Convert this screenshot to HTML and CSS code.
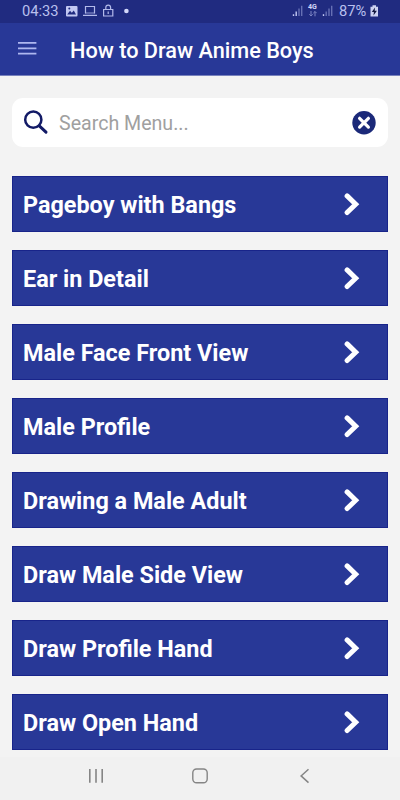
FILE: index.html
```html
<!DOCTYPE html>
<html lang="en">
<head>
    <meta charset="UTF-8">
    <meta name="viewport" content="width=device-width, initial-scale=1.0">
    <title>How to Draw Anime Boys</title>
    <link rel="stylesheet" href="styles.css">
</head>
<body>
    <div class="status-bar">
        <span class="time">04:33</span>
        <svg class="notifications" width="66" height="23" viewBox="0 0 66 23">
            <!-- picture -->
            <rect x="1" y="6" width="11.5" height="10.5" rx="1" fill="#c3c9f3"/>
            <path d="M2.2 14.5 L5 10.8 L6.8 12.8 L8.8 10.5 L11 14.5 Z" fill="#202b80"/>
            <circle cx="4.3" cy="8.6" r="1" fill="#202b80"/>
            <!-- laptop -->
            <path d="M20.5 13.5 V6.5 H29.5 V13.5 M18 15.4 H32" fill="none" stroke="#b3baea" stroke-width="1.2"/>
            <path d="M20.5 13 H29.5" stroke="#b3baea" stroke-width="0.8"/>
            <!-- lock -->
            <path d="M38.6 9.5 H47.8 V16 H38.6 Z M40.8 9.5 V7.5 A2.4 2.4 0 0 1 45.6 7.5 V9.5 M43.2 11.4 V14" fill="none" stroke="#b3baea" stroke-width="1.2"/>
            <circle cx="61.4" cy="11" r="2.3" fill="#d3d8fa"/>
        </svg>
        <div class="signals">
            <svg class="bars" width="12" height="23" viewBox="0 0 12 23">
                <path d="M1.5 14.2 V16 M4.2 11.5 V16" stroke="#c3c9f3" stroke-width="1.4"/>
                <path d="M7 8.5 V16 M9.7 5.7 V16" stroke="#6670b4" stroke-width="1.4"/>
            </svg>
            <div class="network">
                <span>4G</span>
                <svg width="8" height="6" viewBox="0 0 8 6">
                    <path d="M2 0 V5 M0.3 3.3 L2 5 L3.7 3.3 M6 5.3 V0.5 M4.3 2.2 L6 0.5 L7.7 2.2" fill="none" stroke="#7c85c3" stroke-width="1"/>
                </svg>
            </div>
            <svg class="bars" width="12" height="23" viewBox="0 0 12 23">
                <path d="M1.5 14.2 V16" stroke="#c3c9f3" stroke-width="1.4"/>
                <path d="M4.2 11.5 V16 M7 8.5 V16 M9.7 5.7 V16" stroke="#6670b4" stroke-width="1.4"/>
            </svg>
        </div>
        <span class="percent">87%</span>
        <svg class="battery" width="9" height="23" viewBox="0 0 9 23">
            <path d="M0.5 6.8 H2.5 V5.3 H6 V6.8 H8 V16.5 H0.5 Z" fill="#cdd2f2"/>
            <path d="M5 7.6 L1.8 12 H3.9 L3.5 15.5 L6.9 10.8 H4.7 Z" fill="#11163f"/>
        </svg>
    </div>

    <header>
        <button class="menu-btn" aria-label="Menu">
            <svg width="20" height="14" viewBox="0 0 20 14">
                <path d="M1 0.9 H19.4 M1 6.4 H19.4 M1 11.6 H19.4" stroke="#aeb7f0" stroke-width="1.7"/>
            </svg>
        </button>
        <h1>How to Draw Anime Boys</h1>
    </header>

    <main>
        <div class="search">
            <svg width="26" height="26" viewBox="0 0 26 26">
                <circle cx="10.3" cy="9.7" r="8.1" fill="none" stroke="#121a66" stroke-width="2.5"/>
                <path d="M16.3 15.8 L23 22.2" stroke="#121a66" stroke-width="3" stroke-linecap="round"/>
            </svg>
            <input type="text" placeholder="Search Menu...">
            <svg class="clear" width="24" height="24" viewBox="0 0 24 24">
                <circle cx="12" cy="11.7" r="11.7" fill="#1b2979"/>
                <path d="M7.6 7.3 L16.4 16.1 M16.4 7.3 L7.6 16.1" stroke="#fff" stroke-width="3.2" stroke-linecap="round"/>
            </svg>
        </div>
        <ul class="menu-list">
            <!-- Menu items are added by the script -->
        </ul>
    </main>

    <nav class="nav-bar">
        <svg width="16" height="16" viewBox="0 0 16 16">
            <path d="M1.8 1 V14.8 M8 1 V14.8 M14.2 1 V14.8" stroke="#858585" stroke-width="1.6"/>
        </svg>
        <svg width="16" height="16" viewBox="0 0 16 16">
            <rect x="0.8" y="1" width="14.4" height="13.8" rx="3.8" fill="none" stroke="#858585" stroke-width="1.4"/>
        </svg>
        <svg width="16" height="16" viewBox="0 0 16 16">
            <path d="M12.5 1.2 L5.1 7.9 L12.5 14.6" fill="none" stroke="#858585" stroke-width="1.5"/>
        </svg>
    </nav>

    <script>
        const items = [
            "Pageboy with Bangs",
            "Ear in Detail",
            "Male Face Front View",
            "Male Profile",
            "Drawing a Male Adult",
            "Draw Male Side View",
            "Draw Profile Hand",
            "Draw Open Hand"
        ];

        const list = document.querySelector(".menu-list");
        items.forEach(item => {
            const li = document.createElement("li");
            li.innerHTML = `
                <span>${item}</span>
                <svg width="16" height="24" viewBox="0 0 16 24">
                    <path d="M3.1 3.9 L11.7 12.2 L3.1 20.5" fill="none" stroke="#fff" stroke-width="5" stroke-linecap="round"/>
                </svg>
            `;
            list.appendChild(li);
        });
    </script>
</body>
</html>
```
FILE: styles.css
```css
body {
    font-family: Roboto, sans-serif;
    margin: 0;
    height: 800px;
    display: flex;
    flex-direction: column;
    overflow: hidden;
    background-color: #f3f3f3;
}

svg {
    display: block;
    flex-shrink: 0;
}

/* Status bar */
.status-bar {
    display: flex;
    height: 23px;
    padding-left: 22px;
    box-sizing: border-box;
    background-color: #202b80;
    color: #b9c0ee;
    font-size: 14.7px;
    line-height: 23px;
}

.time {
    width: 43px;
}

.signals {
    display: flex;
    margin-left: 161px;
}

.network {
    display: flex;
    flex-direction: column;
    align-items: center;
    width: 9px;
    margin: 0 5px 0 4px;
    padding-top: 4px;
    font-size: 7px;
    font-weight: bold;
    line-height: 7px;
    color: #d3d8fa;
}

.percent {
    width: 27px;
    margin-left: 5px;
    margin-right: 4px;
}

/* Header */
header {
    display: flex;
    align-items: center;
    height: 53px;
    box-sizing: border-box;
    padding: 0 17px;
    background-color: #283897;
    border-bottom: 1px solid #7882bd;
}

.menu-btn {
    padding: 0;
    margin-right: 33px;
    border: none;
    background: none;
    cursor: pointer;
}

h1 {
    margin: 0;
    padding-top: 2px;
    font-size: 21.7px;
    font-weight: 500;
    color: #fff;
    white-space: nowrap;
}

main {
    flex: 1;
    padding: 22px 12px 0;
}

/* Search box */
.search {
    display: flex;
    align-items: center;
    height: 49px;
    box-sizing: border-box;
    padding: 0 12px 0 11px;
    background-color: #fff;
    border-radius: 11px;
}

.search input {
    flex: 1;
    min-width: 0;
    margin: 1px 0 0 10px;
    padding: 0;
    border: none;
    outline: none;
    background: none;
    font-family: Roboto, sans-serif;
    font-size: 19.6px;
}

.search input::placeholder {
    color: #a0a0a0;
}

/* Menu */
.menu-list {
    list-style-type: none;
    display: flex;
    flex-direction: column;
    gap: 18px;
    margin: 29px 0 0;
    padding: 0;
}

.menu-list li {
    display: flex;
    align-items: center;
    justify-content: space-between;
    height: 56px;
    box-sizing: border-box;
    padding: 0 27px 0 10px;
    background-color: #283897;
    border: 1px solid #18248a;
    color: #fff;
    font-size: 23.4px;
    font-weight: bold;
}

.menu-list span {
    padding-top: 1px;
}

/* Bottom navigation */
.nav-bar {
    display: flex;
    justify-content: center;
    align-items: center;
    gap: 88px;
    height: 43px;
    padding-bottom: 5px;
    box-sizing: border-box;
    background-color: #f1f1f1;
}
```
